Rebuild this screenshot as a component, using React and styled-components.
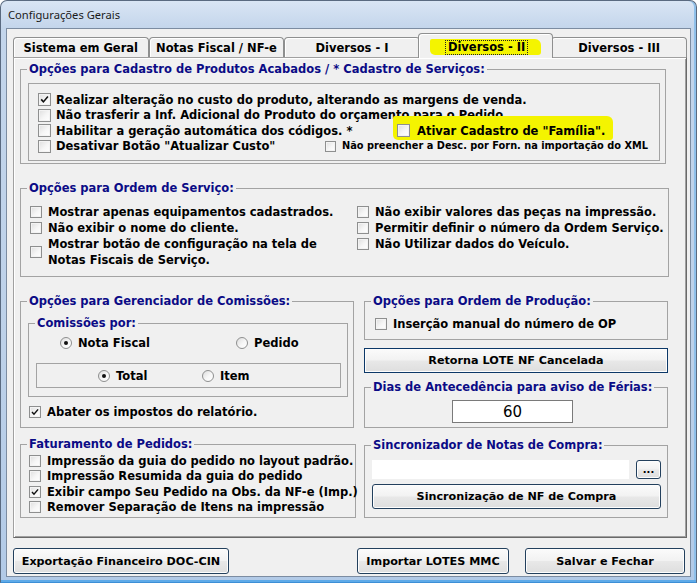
import React from 'react';
import styled, { createGlobalStyle } from 'styled-components';

const GlobalStyle = createGlobalStyle`
  html, body {
    margin: 0;
    padding: 0;
    background: #ffffff;
  }
  body {
    font-family: "DejaVu Sans", Verdana, sans-serif;
  }
  * {
    box-sizing: border-box;
  }
`;

const Frame = styled.div`
  width: 697px;
  height: 583px;
  display: flex;
  flex-direction: column;
  padding: 0 5px 5px 5px;
  border: 1px solid #5a6a80;
  border-bottom-color: #3d8fd6;
  border-radius: 7px 7px 0 0;
  background: linear-gradient(#d9e5f4, #c3d5eb 28px, #bdd1e9 60%, #b2cae7);
  box-shadow: inset 0 -2px 0 #5eaae8, inset -2px 0 0 #8fc0ea;
`;

const TitleBar = styled.div`
  height: 27px;
  display: flex;
  align-items: center;
  padding-left: 2px;
  font-family: "Noto Sans", "Open Sans", sans-serif;
  font-size: 11.2px;
  color: #1b1b1b;
`;

const Client = styled.div`
  flex: 1;
  display: flex;
  flex-direction: column;
  padding: 4px 3px 0 6px;
  border: 1px solid #7c8ca1;
  background: #f0f0f0;
`;

const TabStrip = styled.div`
  height: 24px;
  display: flex;
  align-items: flex-end;
`;

const Tab = styled.div`
  flex: 1;
  height: ${p => (p.$active ? '25px' : '20px')};
  margin: ${p => (p.$active ? '0 -2px -1px' : '0')};
  padding-top: ${p => (p.$active ? '1px' : '0')};
  position: relative;
  z-index: ${p => (p.$active ? 1 : 0)};
  display: flex;
  align-items: center;
  justify-content: center;
  border: 1px solid #8e8f8f;
  border-bottom: none;
  border-radius: 4px 4px 0 0;
  background: #f0f0f0;
  box-shadow: inset 1px 1px 0 #ffffff;
  font-weight: bold;
  font-size: 11.5px;
  color: #000;
  white-space: nowrap;
`;

const Marker = styled.span`
  display: inline-flex;
  align-items: center;
  background: #f4f400;
  padding: ${p => p.$pad};
  margin: ${p => p.$margin || '0'};
  border-radius: 2px 6px 3px 5px;
`;

const FocusText = styled.span`
  line-height: 13px;
  padding: 0 2px;
  outline: 1px dotted #222;
`;

const Pane = styled.div`
  height: 481px;
  display: flex;
  flex-direction: column;
  padding: 4px 17px 0 6px;
  border: 1px solid;
  border-color: #a0a0a0 #696969 #696969 #a0a0a0;
  box-shadow: inset 1px 1px 0 #ffffff, inset -1px -1px 0 #a0a0a0;
`;

const Group = styled.fieldset`
  margin: ${p => p.$margin || '0'};
  padding: 0;
  min-width: 0;
  border: 1px solid #a3a3a3;
`;

const Caption = styled.legend`
  margin-left: 6px;
  padding: 0 2px;
  font-weight: bold;
  font-size: 11.5px;
  line-height: 14px;
  color: #0b0b86;
  white-space: nowrap;
`;

const Body = styled.div`
  padding: ${p => p.$pad};
`;

const Inset = styled.div`
  border: 1px solid #a3a3a3;
  padding: 8px 0 6px 9px;
`;

const Line = styled.div`
  display: flex;
  align-items: center;
  height: ${p => p.$h || '15.5px'};
  margin: ${p => p.$margin || '0'};
`;

const Cell = styled.div`
  display: flex;
  align-items: center;
  width: ${p => p.$w || 'auto'};
  flex: none;
`;

const Item = styled.div`
  display: flex;
  align-items: center;
  gap: ${p => p.$gap || '5px'};
  font-weight: bold;
  font-size: ${p => p.$fs || '11.5px'};
  line-height: 16px;
  color: #000;
  white-space: nowrap;
`;

const Box = styled.span`
  width: ${p => p.$size}px;
  height: ${p => p.$size}px;
  flex: none;
  display: flex;
  align-items: center;
  justify-content: center;
  border: 1px solid #8e8f8f;
  background: linear-gradient(135deg, #dedede 0%, #f6f6f6 55%, #ffffff 100%);
  box-shadow: inset 0 0 0 1px #f3f3f3;
`;

const Circle = styled.span`
  width: 12px;
  height: 12px;
  flex: none;
  border-radius: 50%;
  display: flex;
  align-items: center;
  justify-content: center;
  border: 1px solid #8e8f8f;
  background: linear-gradient(135deg, #dcdcdc 0%, #f7f7f7 55%, #ffffff 100%);
`;

const Dot = styled.span`
  width: 4px;
  height: 4px;
  border-radius: 50%;
  background: #111;
`;

const OsGrid = styled.div`
  display: grid;
  grid-template-columns: 327px 1fr;
  grid-template-rows: repeat(4, 16px);
  grid-auto-flow: column;
`;

const OsCell = styled.div`
  display: flex;
  align-items: center;
  grid-row: ${p => (p.$span ? 'span 2' : 'auto')};
`;

const Columns = styled.div`
  display: grid;
  grid-template-columns: 336px 304px;
  column-gap: 8px;
  margin-top: 17px;
  align-items: start;
`;

const Column = styled.div`
  display: flex;
  flex-direction: column;
`;

const Flat = styled.div`
  height: 25px;
  margin-top: 13px;
  display: flex;
  align-items: center;
  padding-left: ${p => p.$left};
  border: 1px solid #a3a3a3;
`;

const Button = styled.button`
  width: ${p => p.$w || '100%'};
  height: ${p => p.$h || '25px'};
  margin: ${p => p.$margin || '0'};
  padding: 0;
  flex: none;
  font-family: inherit;
  font-weight: bold;
  font-size: ${p => p.$fs || '11.2px'};
  color: #000;
  border: 1px solid ${p => (p.$square ? '#0c3868' : '#23405d')};
  border-radius: ${p => (p.$square ? '0' : '3px')};
  background: linear-gradient(#fbfbfb, #f2f2f2 48%, #e8e8e8 52%, #dedede);
  box-shadow: inset 0 0 0 1px #fdfdfd;
`;

const Field = styled.div`
  width: ${p => p.$w};
  height: ${p => p.$h};
  flex: none;
  display: flex;
  align-items: center;
  justify-content: center;
  background: #ffffff;
  border: 1px solid ${p => p.$border || '#ffffff'};
  font-size: 15px;
  color: #000;
`;

const FieldRow = styled.div`
  display: flex;
  gap: 7px;
`;

const Footer = styled.div`
  display: flex;
  align-items: flex-start;
  padding: 10px 2px 0 0;
`;

const Check = ({ on, size = 12 }) => (
  <Box $size={size}>
    {on && (
      <svg width={size - 2} height={size - 2} viewBox="0 0 11 11">
        <path d="M2.2 5.4 L4.4 7.9 L8.9 2.6" fill="none" stroke="#111" strokeWidth="1.6" />
      </svg>
    )}
  </Box>
);

const Option = ({ on, size, gap, fs, children }) => (
  <Item $gap={gap} $fs={fs}>
    <Check on={on} size={size} />
    <span>{children}</span>
  </Item>
);

const Radio = ({ on, children }) => (
  <Item $gap="6px">
    <Circle>{on && <Dot />}</Circle>
    <span>{children}</span>
  </Item>
);

const tabs = ['Sistema em Geral', 'Notas Fiscal / NF-e', 'Diversos - I', 'Diversos - II', 'Diversos - III'];

export default function App() {
  return (
    <>
      <GlobalStyle />
      <Frame>
        <TitleBar>Configurações Gerais</TitleBar>
        <Client>
          <TabStrip>
            {tabs.map((t, i) =>
              i === 3 ? (
                <Tab key={t} $active>
                  <Marker $pad="2px 14px 1px 16px">
                    <FocusText>{t}</FocusText>
                  </Marker>
                </Tab>
              ) : (
                <Tab key={t}>{t}</Tab>
              )
            )}
          </TabStrip>

          <Pane>
            <Group $margin="0 3px 0 0">
              <Caption>Opções para Cadastro de Produtos Acabados / * Cadastro de Serviços:</Caption>
              <Body $pad="7px 5px 2px 7px">
                <Inset>
                  <Line>
                    <Option on size={13}>Realizar alteração no custo do produto, alterando as margens de venda.</Option>
                  </Line>
                  <Line>
                    <Option size={13}>Não trasferir a Inf. Adicional do Produto do orçamento para o Pedido.</Option>
                  </Line>
                  <Line>
                    <Cell $w="359px">
                      <Option size={13}>Habilitar a geração automática dos códigos. *</Option>
                    </Cell>
                    <Marker $pad="7px 8px 1px 4px" $margin="-7px -8px -1px -4px">
                      <Option size={13} gap="7px">Ativar Cadastro de "Família".</Option>
                    </Marker>
                  </Line>
                  <Line>
                    <Cell $w="287px">
                      <Option size={13}>Desativar Botão "Atualizar Custo"</Option>
                    </Cell>
                    <Option size={11} gap="6px" fs="9.8px">Não preencher a Desc. por Forn. na importação do XML</Option>
                  </Line>
                </Inset>
              </Body>
            </Group>

            <Group $margin="17px 0 0 0">
              <Caption>Opções para Ordem de Serviço:</Caption>
              <Body $pad="9px 0 8px 9px">
                <OsGrid>
                  <OsCell><Option gap="6px">Mostrar apenas equipamentos cadastrados.</Option></OsCell>
                  <OsCell><Option gap="6px">Não exibir o nome do cliente.</Option></OsCell>
                  <OsCell $span>
                    <Option gap="6px">
                      Mostrar botão de configuração na tela de
                      <br />
                      Notas Fiscais de Serviço.
                    </Option>
                  </OsCell>
                  <OsCell><Option gap="6px">Não exibir valores das peças na impressão.</Option></OsCell>
                  <OsCell><Option gap="6px">Permitir definir o número da Ordem Serviço.</Option></OsCell>
                  <OsCell><Option gap="6px">Não Utilizar dados do Veículo.</Option></OsCell>
                </OsGrid>
              </Body>
            </Group>

            <Columns>
              <Column>
                <Group $margin="0 2px 0 0">
                  <Caption>Opções para Gerenciador de Comissões:</Caption>
                  <Body $pad="8px 5px 7px 7px">
                    <Group>
                      <Caption>Comissões por:</Caption>
                      <Body $pad="6px 6px 8px 7px">
                        <Line $h="14px" $margin="0 0 0 24px">
                          <Cell $w="176px"><Radio on>Nota Fiscal</Radio></Cell>
                          <Radio>Pedido</Radio>
                        </Line>
                        <Flat $left="61px">
                          <Cell $w="104px"><Radio on>Total</Radio></Cell>
                          <Radio>Item</Radio>
                        </Flat>
                      </Body>
                    </Group>
                    <Line $h="16px" $margin="7px 0 0 1px">
                      <Option on gap="6px">Abater os impostos do relatório.</Option>
                    </Line>
                  </Body>
                </Group>

                <Group $margin="9px 0 0 0">
                  <Caption>Faturamento de Pedidos:</Caption>
                  <Body $pad="2px 0 2px 8px">
                    <Line><Option gap="6px">Impressão da guia do pedido no layout padrão.</Option></Line>
                    <Line><Option gap="6px">Impressão Resumida da guia do pedido</Option></Line>
                    <Line><Option on gap="6px">Exibir campo Seu Pedido na Obs. da NF-e (Imp.)</Option></Line>
                    <Line><Option gap="6px">Remover Separação de Itens na impressão</Option></Line>
                  </Body>
                </Group>
              </Column>

              <Column>
                <Group>
                  <Caption>Opções para Ordem de Produção:</Caption>
                  <Body $pad="8px 0 7px 10px">
                    <Line $h="16px">
                      <Option gap="6px">Inserção manual do número de OP</Option>
                    </Line>
                  </Body>
                </Group>

                <Button $square $margin="8px 0 0 0">Retorna LOTE NF Cancelada</Button>

                <Group $margin="7px 0 0 0">
                  <Caption>Dias de Antecedência para aviso de Férias:</Caption>
                  <Body $pad="6px 0 4px 87px">
                    <Field $w="121px" $h="23px" $border="#7a7a7a">60</Field>
                  </Body>
                </Group>

                <Group $margin="10px 0 0 0">
                  <Caption>Sincronizador de Notas de Compra:</Caption>
                  <Body $pad="8px 6px 8px 7px">
                    <FieldRow>
                      <Field $w="257px" $h="19px" />
                      <Button $w="25px" $h="19px" $fs="10px">...</Button>
                    </FieldRow>
                    <Button $margin="5px 0 0 0">Sincronização de NF de Compra</Button>
                  </Body>
                </Group>
              </Column>
            </Columns>
          </Pane>

          <Footer>
            <Button $w="216px" $h="26px">Exportação Financeiro DOC-CIN</Button>
            <Button $w="152px" $h="26px" $margin="0 0 0 auto">Importar LOTES MMC</Button>
            <Button $w="160px" $h="26px" $margin="0 0 0 16px">Salvar e Fechar</Button>
          </Footer>
        </Client>
      </Frame>
    </>
  );
}
